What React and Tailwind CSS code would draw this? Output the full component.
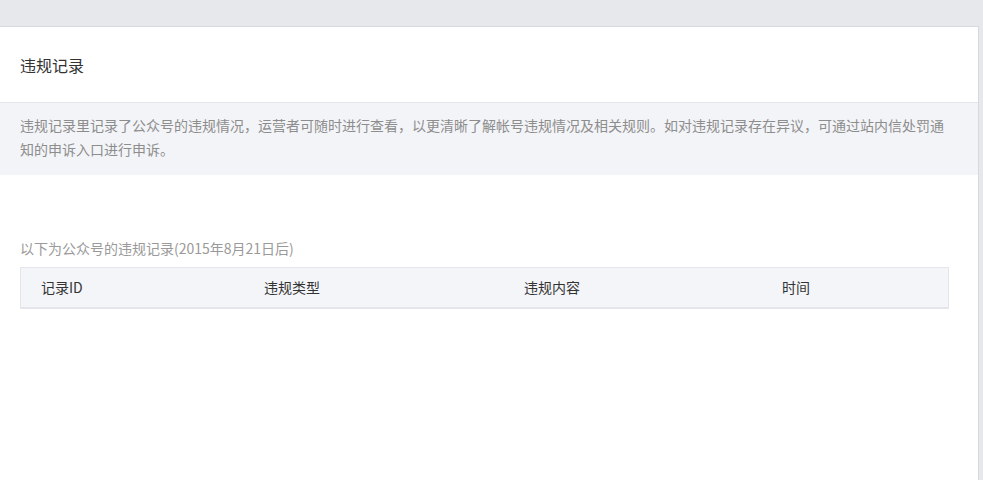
import React from "react";

const columns = [
  { key: "id", label: "记录ID" },
  { key: "type", label: "违规类型" },
  { key: "content", label: "违规内容" },
  { key: "time", label: "时间" },
];

const App = () => {
  return (
    <div className="min-h-screen bg-[#e7e8eb] font-['Noto_Sans_CJK_SC','Noto_Sans',sans-serif]">
      <div className="h-[26px]" />
      <div className="mr-[4px] min-h-[454px] bg-white border-t border-r border-[#d8d9dc]">
        {/* page title */}
        <div className="h-[75px] flex items-center px-5 text-[16px] text-[#333]">
          违规记录
        </div>

        {/* notice */}
        <div className="border-t border-[#e4e6ea] bg-[#f3f4f8] pt-[10px] pb-[14px] pl-5 pr-[30px] text-[14px] leading-[24px] text-[#8d8d8d]">
          违规记录里记录了公众号的违规情况，运营者可随时进行查看，以更清晰了解帐号违规情况及相关规则。如对违规记录存在异议，可通过站内信处罚通知的申诉入口进行申诉。
        </div>

        {/* records */}
        <div className="pt-[61px] pl-5 pr-[29px]">
          <p className="text-[14px] leading-[24px] text-[#9a9a9a]">
            以下为公众号的违规记录(2015年8月21日后)
          </p>
          <div className="mt-[7px] border border-b-2 border-[#e4e6eb] bg-[#f4f5f9]">
            <div className="grid grid-cols-[223px_260px_258px_1fr] h-[39px] items-center text-[14px] text-[#333]">
              {columns.map((col) => (
                <div key={col.key} className="px-5">
                  {col.label}
                </div>
              ))}
            </div>
          </div>
        </div>
      </div>
    </div>
  );
};

export default App;
